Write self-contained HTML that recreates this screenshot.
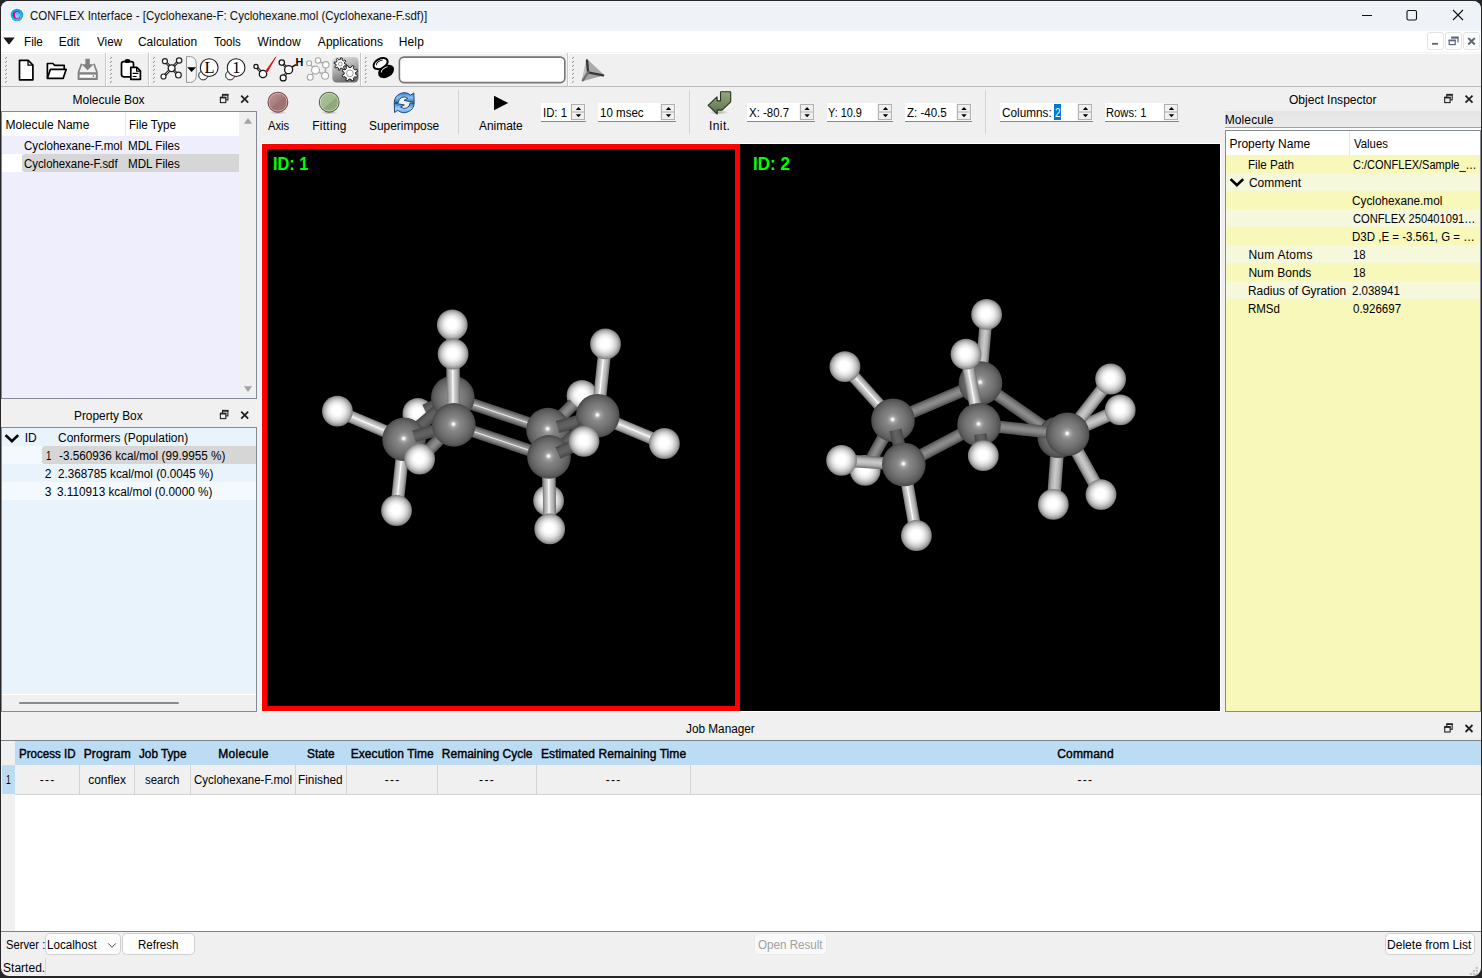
<!DOCTYPE html>
<html><head><meta charset="utf-8"><title>CONFLEX Interface</title>
<style>
html,body{margin:0;padding:0;background:#262626;}
body{width:1482px;height:978px;overflow:hidden;position:relative;font-family:"Liberation Sans", sans-serif;font-size:12px;}
#w div,#w span.t,#w svg{position:absolute;}
#w div{box-sizing:border-box;}
span.t{white-space:nowrap;line-height:16px;height:16px;}
</style></head><body><div id="w">
<div style="left:1px;top:1px;width:1480px;height:975px;background:#f0f0f0;border-radius:8px 8px 8px 8px;overflow:hidden;"></div>
<div style="left:1px;top:1px;width:1480px;height:30px;background:#eff3f8;border-radius:8px 8px 0 0;"></div>
<div style="left:1px;top:31px;width:1480px;height:21px;background:#ffffff;"></div>
<div style="left:1px;top:86px;width:1480px;height:1px;background:#bdbdbd;"></div>
<div style="left:1px;top:52px;width:1480px;height:1px;background:#f3f3f3;"></div>
<div style="left:1px;top:53px;width:1480px;height:1px;background:#fdfdfd;"></div>
<div style="left:105px;top:53px;width:1px;height:33px;background:#c9c9c9;"></div>
<div style="left:106px;top:53px;width:1px;height:33px;background:#ffffff;"></div>
<div style="left:148px;top:53px;width:1px;height:33px;background:#c9c9c9;"></div>
<div style="left:149px;top:53px;width:1px;height:33px;background:#ffffff;"></div>
<div style="left:360px;top:53px;width:1px;height:33px;background:#c9c9c9;"></div>
<div style="left:361px;top:53px;width:1px;height:33px;background:#ffffff;"></div>
<div style="left:567px;top:53px;width:1px;height:33px;background:#c9c9c9;"></div>
<div style="left:568px;top:53px;width:1px;height:33px;background:#ffffff;"></div>
<div style="left:1px;top:111px;width:256px;height:288px;background:#eeeefd;border:1px solid #848a96;"></div>
<div style="left:2px;top:112px;width:237px;height:24px;background:#ffffff;"></div>
<div style="left:125px;top:112px;width:1px;height:24px;background:#e5e5e5;"></div>
<div style="left:239px;top:112px;width:17px;height:286px;background:#f0f0f0;"></div>
<div style="left:2px;top:154px;width:237px;height:18px;background:#ffffff;"></div>
<div style="left:22px;top:154px;width:217px;height:18px;background:#d6d6d6;border-radius:3px 0 0 3px;"></div>
<div style="left:1px;top:427px;width:256px;height:285px;background:#e8f3fc;border:1px solid #848a96;"></div>
<div style="left:2px;top:446px;width:254px;height:18px;background:#f4f9fd;"></div>
<div style="left:2px;top:482px;width:254px;height:18px;background:#f4f9fd;"></div>
<div style="left:42px;top:446px;width:214px;height:18px;background:#d6d6d6;border-radius:3px 0 0 3px;"></div>
<div style="left:2px;top:694px;width:254px;height:1px;background:#ffffff;"></div>
<div style="left:2px;top:695px;width:254px;height:16px;background:#f0f0f0;"></div>
<div style="left:19px;top:701.5px;width:160px;height:2px;background:#8a8a8a;border-radius:1px;"></div>
<div style="left:458px;top:90px;width:1px;height:44px;background:#d4d4d4;"></div>
<div style="left:689px;top:90px;width:1px;height:44px;background:#d4d4d4;"></div>
<div style="left:985px;top:90px;width:1px;height:44px;background:#d4d4d4;"></div>
<div style="left:541px;top:103px;width:29px;height:18px;background:#ffffff;"></div>
<div style="left:570px;top:103px;width:16px;height:18px;background:#f4f4f4;"></div>
<div style="left:541px;top:121px;width:45px;height:1px;background:#868686;"></div>
<div style="left:571px;top:104px;width:14px;height:16px;background:#f0f0f0;border:1px solid #b0b0b0;"></div>
<div style="left:598px;top:103px;width:62px;height:18px;background:#ffffff;"></div>
<div style="left:660px;top:103px;width:16px;height:18px;background:#f4f4f4;"></div>
<div style="left:598px;top:121px;width:78px;height:1px;background:#868686;"></div>
<div style="left:661px;top:104px;width:14px;height:16px;background:#f0f0f0;border:1px solid #b0b0b0;"></div>
<div style="left:747px;top:103px;width:51.6px;height:18px;background:#ffffff;"></div>
<div style="left:798.6px;top:103px;width:16px;height:18px;background:#f4f4f4;"></div>
<div style="left:747px;top:121px;width:67.6px;height:1px;background:#868686;"></div>
<div style="left:799.6px;top:104px;width:14px;height:16px;background:#f0f0f0;border:1px solid #b0b0b0;"></div>
<div style="left:827px;top:103px;width:50px;height:18px;background:#ffffff;"></div>
<div style="left:877px;top:103px;width:16px;height:18px;background:#f4f4f4;"></div>
<div style="left:827px;top:121px;width:66px;height:1px;background:#868686;"></div>
<div style="left:878px;top:104px;width:14px;height:16px;background:#f0f0f0;border:1px solid #b0b0b0;"></div>
<div style="left:905px;top:103px;width:50.5px;height:18px;background:#ffffff;"></div>
<div style="left:955.5px;top:103px;width:16px;height:18px;background:#f4f4f4;"></div>
<div style="left:905px;top:121px;width:66.5px;height:1px;background:#868686;"></div>
<div style="left:956.5px;top:104px;width:14px;height:16px;background:#f0f0f0;border:1px solid #b0b0b0;"></div>
<div style="left:1000px;top:103px;width:77px;height:18px;background:#ffffff;"></div>
<div style="left:1077px;top:103px;width:16px;height:18px;background:#f4f4f4;"></div>
<div style="left:1000px;top:121px;width:93px;height:1px;background:#868686;"></div>
<div style="left:1078px;top:104px;width:14px;height:16px;background:#f0f0f0;border:1px solid #b0b0b0;"></div>
<div style="left:1054px;top:104px;width:7px;height:16px;background:#0078d7;"></div>
<div style="left:1105px;top:103px;width:58px;height:18px;background:#ffffff;"></div>
<div style="left:1163px;top:103px;width:16px;height:18px;background:#f4f4f4;"></div>
<div style="left:1105px;top:121px;width:74px;height:1px;background:#868686;"></div>
<div style="left:1164px;top:104px;width:14px;height:16px;background:#f0f0f0;border:1px solid #b0b0b0;"></div>
<div style="left:261px;top:143px;width:960px;height:569px;background:#ffffff;"></div>
<div style="left:262px;top:144px;width:478px;height:567px;background:#000;border:5px solid #ff0000;"></div>
<div style="left:740px;top:144px;width:480px;height:567px;background:#000;"></div>
<div style="left:1225px;top:111px;width:256px;height:16px;background:linear-gradient(#e4e4e4,#ebebeb);"></div>
<div style="left:1225px;top:127px;width:256px;height:1px;background:#a0a0a0;"></div>
<div style="left:1225px;top:128px;width:256px;height:2px;background:#fcfcfc;"></div>
<div style="left:1225px;top:130px;width:256px;height:582px;background:#f8f8ba;border:1px solid #848a96;"></div>
<div style="left:1226px;top:131px;width:254px;height:24px;background:#fff;"></div>
<div style="left:1349px;top:131px;width:1px;height:24px;background:#e5e5e5;"></div>
<div style="left:1226px;top:173px;width:254px;height:18px;background:#f6f8dc;"></div>
<div style="left:1226px;top:209px;width:254px;height:18px;background:#f6f8dc;"></div>
<div style="left:1226px;top:245px;width:254px;height:18px;background:#f6f8dc;"></div>
<div style="left:1226px;top:281px;width:254px;height:18px;background:#f6f8dc;"></div>
<div style="left:1px;top:740px;width:1480px;height:192px;background:#ffffff;border-top:1px solid #7a828c;border-bottom:1px solid #7a828c;"></div>
<div style="left:1px;top:741px;width:1.2px;height:190px;background:#f0f0f0;"></div>
<div style="left:2px;top:741px;width:13px;height:24px;background:#f0f0f0;"></div>
<div style="left:15px;top:741px;width:1466px;height:24px;background:#bcdcf4;"></div>
<div style="left:2px;top:765px;width:13px;height:29px;background:#bcdcf4;"></div>
<div style="left:2px;top:794px;width:13px;height:137px;background:#f0f0f0;"></div>
<div style="left:15px;top:765px;width:1466px;height:30px;background:#f0f0f0;border-bottom:1px solid #d4d4d4;"></div>
<div style="left:79px;top:765px;width:1px;height:29px;background:#d4d4d4;"></div>
<div style="left:134px;top:765px;width:1px;height:29px;background:#d4d4d4;"></div>
<div style="left:190px;top:765px;width:1px;height:29px;background:#d4d4d4;"></div>
<div style="left:295px;top:765px;width:1px;height:29px;background:#d4d4d4;"></div>
<div style="left:346px;top:765px;width:1px;height:29px;background:#d4d4d4;"></div>
<div style="left:437px;top:765px;width:1px;height:29px;background:#d4d4d4;"></div>
<div style="left:536px;top:765px;width:1px;height:29px;background:#d4d4d4;"></div>
<div style="left:690px;top:765px;width:1px;height:29px;background:#d4d4d4;"></div>
<div style="left:45px;top:933px;width:76px;height:22px;background:#fdfdfd;border:1px solid #d0d0d0;border-radius:4.5px;"></div>
<div style="left:122px;top:933px;width:73px;height:22px;background:#fdfdfd;border:1px solid #d0d0d0;border-radius:4.5px;"></div>
<div style="left:754px;top:933px;width:73px;height:22px;background:#f9f9f9;border:1px solid #ebebeb;border-radius:4.5px;"></div>
<div style="left:1385px;top:933px;width:90px;height:22px;background:#fdfdfd;border:1px solid #d0d0d0;border-radius:4.5px;"></div>
<div style="left:45px;top:958px;width:1px;height:17px;background:#d8d8d8;"></div>
<svg width="1482" height="978" viewBox="0 0 1482 978" style="left:0;top:0"><defs>
<radialGradient id="sH" cx="0.5" cy="0.5" r="0.5" fx="0.47" fy="0.46"><stop offset="0" stop-color="#fff"/><stop offset="0.3" stop-color="#fff"/><stop offset="0.55" stop-color="#e8e8e8"/><stop offset="0.78" stop-color="#bebebe"/><stop offset="0.92" stop-color="#969696"/><stop offset="1" stop-color="#767676"/></radialGradient>
<radialGradient id="sC" cx="0.5" cy="0.5" r="0.5" fx="0.49" fy="0.48"><stop offset="0" stop-color="#fff"/><stop offset="0.05" stop-color="#f0f0f0"/><stop offset="0.14" stop-color="#a4a4a4"/><stop offset="0.3" stop-color="#868686"/><stop offset="0.6" stop-color="#737373"/><stop offset="0.85" stop-color="#5e5e5e"/><stop offset="1" stop-color="#484848"/></radialGradient>
<radialGradient id="sCb" cx="0.5" cy="0.5" r="0.5" fx="0.49" fy="0.48"><stop offset="0" stop-color="#8a8a8a"/><stop offset="0.3" stop-color="#7a7a7a"/><stop offset="0.6" stop-color="#6a6a6a"/><stop offset="0.85" stop-color="#585858"/><stop offset="1" stop-color="#444"/></radialGradient>
<linearGradient id="bL" x1="0" y1="0" x2="0" y2="1"><stop offset="0" stop-color="#727272"/><stop offset="0.15" stop-color="#a8a8a8"/><stop offset="0.36" stop-color="#cfcfcf"/><stop offset="0.46" stop-color="#ffffff"/><stop offset="0.56" stop-color="#d2d2d2"/><stop offset="0.8" stop-color="#ababab"/><stop offset="1" stop-color="#6a6a6a"/></linearGradient>
<linearGradient id="bLm" x1="0" y1="0" x2="0" y2="1"><stop offset="0" stop-color="#6c6c6c"/><stop offset="0.25" stop-color="#b0b0b0"/><stop offset="0.5" stop-color="#cacaca"/><stop offset="0.75" stop-color="#b0b0b0"/><stop offset="1" stop-color="#686868"/></linearGradient>
<linearGradient id="bS" x1="0" y1="0" x2="0" y2="1"><stop offset="0" stop-color="#4c4c4c"/><stop offset="0.25" stop-color="#7e7e7e"/><stop offset="0.42" stop-color="#9e9e9e"/><stop offset="0.5" stop-color="#efefef"/><stop offset="0.58" stop-color="#a2a2a2"/><stop offset="0.78" stop-color="#7a7a7a"/><stop offset="1" stop-color="#4a4a4a"/></linearGradient>
<linearGradient id="bM" x1="0" y1="0" x2="0" y2="1"><stop offset="0" stop-color="#505050"/><stop offset="0.3" stop-color="#808080"/><stop offset="0.5" stop-color="#8e8e8e"/><stop offset="0.7" stop-color="#7e7e7e"/><stop offset="1" stop-color="#4e4e4e"/></linearGradient>
<linearGradient id="bD" x1="0" y1="0" x2="0" y2="1"><stop offset="0" stop-color="#454545"/><stop offset="0.3" stop-color="#5e5e5e"/><stop offset="0.6" stop-color="#626262"/><stop offset="1" stop-color="#484848"/></linearGradient>
</defs>
<circle cx="417.9" cy="413.5" r="15.4" fill="url(#sH)"/>
<circle cx="582.0" cy="395.5" r="15.4" fill="url(#sH)"/>
<rect transform="translate(452.8,397.6) rotate(155.51) scale(1,1)" x="0" y="-6.20" width="30.68" height="12.40" fill="url(#bD)"/>
<rect transform="translate(548.0,429.6) rotate(-45.08) scale(1,1)" x="0" y="-6.20" width="36.60" height="12.40" fill="url(#bM)"/>
<rect transform="translate(452.8,397.6) rotate(-90.39) scale(1,1)" x="0" y="-6.20" width="72.80" height="12.40" fill="url(#bL)"/>
<rect transform="translate(548.0,429.6) rotate(89.52) scale(1,1)" x="0" y="-6.20" width="70.90" height="12.40" fill="url(#bL)"/>
<circle cx="452.3" cy="324.8" r="15.4" fill="url(#sH)"/>
<circle cx="548.6" cy="500.5" r="15.4" fill="url(#sH)"/>
<rect transform="translate(452.8,397.6) rotate(18.58) scale(1,1)" x="0" y="-6.00" width="100.43" height="12.00" fill="url(#bS)"/>
<rect transform="translate(404.1,439.3) rotate(-40.57) scale(1,1)" x="0" y="-6.20" width="64.11" height="12.40" fill="url(#bD)"/>
<circle cx="452.8" cy="397.6" r="21.8" fill="url(#sC)"/>
<circle cx="548.0" cy="429.6" r="21.8" fill="url(#sC)"/>
<rect transform="translate(557.5,427.0) rotate(-15.60) scale(1,1)" x="0" y="-6.20" width="41.88" height="12.40" fill="url(#bD)"/>
<rect transform="translate(337.4,411.1) rotate(22.92) scale(1,1)" x="0" y="-6.20" width="72.42" height="12.40" fill="url(#bL)"/>
<rect transform="translate(404.1,439.3) rotate(96.09) scale(1,-1)" x="0" y="-6.50" width="71.60" height="13.00" fill="url(#bL)"/>
<rect transform="translate(597.8,415.7) rotate(-83.88) scale(1,1)" x="0" y="-6.50" width="72.21" height="13.00" fill="url(#bL)"/>
<rect transform="translate(597.8,415.7) rotate(22.66) scale(1,1)" x="0" y="-6.20" width="72.17" height="12.40" fill="url(#bL)"/>
<circle cx="404.1" cy="439.3" r="21.8" fill="url(#sC)"/>
<circle cx="597.8" cy="415.7" r="21.8" fill="url(#sC)"/>
<circle cx="337.4" cy="411.1" r="15.4" fill="url(#sH)"/>
<circle cx="396.5" cy="510.5" r="15.4" fill="url(#sH)"/>
<circle cx="605.5" cy="343.9" r="15.4" fill="url(#sH)"/>
<circle cx="664.4" cy="443.5" r="15.4" fill="url(#sH)"/>
<rect transform="translate(414.0,436.4) rotate(-16.16) scale(1,1)" x="0" y="-6.20" width="41.40" height="12.40" fill="url(#bD)"/>
<rect transform="translate(584.6,426.8) rotate(139.83) scale(1,1)" x="0" y="-6.20" width="46.62" height="12.40" fill="url(#bD)"/>
<rect transform="translate(453.8,424.9) rotate(18.58) scale(1,1)" x="0" y="-6.00" width="100.43" height="12.00" fill="url(#bS)"/>
<rect transform="translate(453.8,424.9) rotate(-90.57) scale(1,1)" x="0" y="-6.50" width="70.90" height="13.00" fill="url(#bL)"/>
<rect transform="translate(549.0,456.9) rotate(89.44) scale(1,-1)" x="0" y="-6.50" width="72.00" height="13.00" fill="url(#bL)"/>
<rect transform="translate(453.8,424.9) rotate(135.08) scale(1,1)" x="0" y="-6.20" width="48.30" height="12.40" fill="url(#bM)"/>
<circle cx="453.8" cy="424.9" r="21.8" fill="url(#sC)"/>
<circle cx="549.0" cy="456.9" r="21.8" fill="url(#sC)"/>
<rect transform="translate(557.8,453.0) rotate(-24.02) scale(1,1)" x="0" y="-6.20" width="28.74" height="12.40" fill="url(#bD)"/>
<circle cx="453.1" cy="354.0" r="15.4" fill="url(#sH)"/>
<circle cx="549.7" cy="528.9" r="15.4" fill="url(#sH)"/>
<circle cx="419.6" cy="459.0" r="15.4" fill="url(#sH)"/>
<circle cx="584.0" cy="441.3" r="15.4" fill="url(#sH)"/>
<circle cx="865.2" cy="470.3" r="15.4" fill="url(#sH)"/>
<rect transform="translate(893.0,420.2) rotate(119.03) scale(1,1)" x="0" y="-6.20" width="48.70" height="12.40" fill="url(#bM)"/>
<rect transform="translate(1058.3,437.2) rotate(-23.88) scale(1,1)" x="0" y="-6.60" width="67.69" height="13.20" fill="url(#bLm)"/>
<rect transform="translate(1058.3,437.2) rotate(94.26) scale(1,1)" x="0" y="-6.70" width="67.39" height="13.40" fill="url(#bLm)"/>
<rect transform="translate(980.5,383.0) rotate(34.86) scale(1,1)" x="0" y="-6.20" width="94.82" height="12.40" fill="url(#bM)"/>
<circle cx="1058.3" cy="437.2" r="20.8" fill="url(#sCb)"/>
<rect transform="translate(980.5,383.0) rotate(-84.92) scale(1,1)" x="0" y="-6.20" width="68.87" height="12.40" fill="url(#bLm)"/>
<rect transform="translate(893.0,420.2) rotate(-23.03) scale(1,1)" x="0" y="-6.20" width="95.08" height="12.40" fill="url(#bM)"/>
<circle cx="980.5" cy="383.0" r="21.8" fill="url(#sC)"/>
<circle cx="986.6" cy="314.4" r="15.4" fill="url(#sH)"/>
<rect transform="translate(844.9,366.7) rotate(48.04) scale(1,1)" x="0" y="-6.20" width="71.94" height="12.40" fill="url(#bL)"/>
<circle cx="893.0" cy="420.2" r="21.8" fill="url(#sC)"/>
<circle cx="844.9" cy="366.7" r="15.4" fill="url(#sH)"/>
<rect transform="translate(895.4,429.9) rotate(76.30) scale(1,1)" x="0" y="-6.20" width="35.57" height="12.40" fill="url(#bD)"/>
<rect transform="translate(903.8,464.5) rotate(-27.89) scale(1,1)" x="0" y="-6.20" width="85.08" height="12.40" fill="url(#bM)"/>
<rect transform="translate(979.0,424.7) rotate(6.12) scale(1,1)" x="0" y="-6.20" width="89.11" height="12.40" fill="url(#bM)"/>
<rect transform="translate(979.0,424.7) rotate(-100.45) scale(1,1)" x="0" y="-6.20" width="71.69" height="12.40" fill="url(#bL)"/>
<rect transform="translate(903.8,464.5) rotate(-176.14) scale(1,1)" x="0" y="-6.20" width="62.44" height="12.40" fill="url(#bLm)"/>
<rect transform="translate(903.8,464.5) rotate(79.94) scale(1,-1)" x="0" y="-6.20" width="72.11" height="12.40" fill="url(#bL)"/>
<rect transform="translate(1067.6,434.2) rotate(-52.08) scale(1,1)" x="0" y="-6.60" width="69.97" height="13.20" fill="url(#bLm)"/>
<rect transform="translate(1067.6,434.2) rotate(61.06) scale(1,1)" x="0" y="-6.70" width="69.02" height="13.40" fill="url(#bLm)"/>
<circle cx="1120.2" cy="409.8" r="15.4" fill="url(#sH)"/>
<circle cx="1053.3" cy="504.4" r="15.4" fill="url(#sH)"/>
<circle cx="979.0" cy="424.7" r="21.8" fill="url(#sC)"/>
<circle cx="903.8" cy="464.5" r="21.8" fill="url(#sC)"/>
<circle cx="1067.6" cy="434.2" r="21.8" fill="url(#sC)"/>
<circle cx="966.0" cy="354.2" r="15.4" fill="url(#sH)"/>
<circle cx="841.5" cy="460.3" r="15.4" fill="url(#sH)"/>
<circle cx="916.4" cy="535.5" r="15.4" fill="url(#sH)"/>
<circle cx="1110.6" cy="379.0" r="15.4" fill="url(#sH)"/>
<circle cx="1101.0" cy="494.6" r="15.4" fill="url(#sH)"/>
<rect transform="translate(980.3,434.0) rotate(82.08) scale(1,1)" x="0" y="-6.20" width="21.84" height="12.40" fill="url(#bD)"/>
<circle cx="983.3" cy="455.6" r="15.4" fill="url(#sH)"/></svg><svg width="1482" height="978" viewBox="0 0 1482 978" style="left:0;top:0;pointer-events:none"><defs>
<linearGradient id="gGear" x1="0" y1="0" x2="0.35" y2="1"><stop offset="0" stop-color="#e6e6e6"/><stop offset="0.45" stop-color="#b9b9b9"/><stop offset="1" stop-color="#707070"/></linearGradient>
<linearGradient id="gAxis" x1="0.15" y1="0.1" x2="0.85" y2="0.9"><stop offset="0" stop-color="#b89090"/><stop offset="0.5" stop-color="#a67a7a"/><stop offset="0.52" stop-color="#9f7070"/><stop offset="1" stop-color="#a07272"/></linearGradient>
<linearGradient id="gFit" x1="0.15" y1="0.1" x2="0.85" y2="0.9"><stop offset="0" stop-color="#a9c296"/><stop offset="0.55" stop-color="#9fb98b"/><stop offset="0.6" stop-color="#8ea57b"/><stop offset="1" stop-color="#94ac80"/></linearGradient>
<linearGradient id="gBlue" x1="0" y1="0" x2="0" y2="1"><stop offset="0" stop-color="#2f86d6"/><stop offset="0.5" stop-color="#8cc0ee"/><stop offset="1" stop-color="#2c7fd0"/></linearGradient>
<linearGradient id="gBlue2" x1="0" y1="0" x2="0" y2="1"><stop offset="0" stop-color="#5aa2e2"/><stop offset="0.4" stop-color="#a6d0f4"/><stop offset="1" stop-color="#2a7ccc"/></linearGradient>
<linearGradient id="gInit" x1="0" y1="0" x2="0" y2="1"><stop offset="0" stop-color="#93a67f"/><stop offset="0.45" stop-color="#7d9169"/><stop offset="1" stop-color="#566a47"/></linearGradient>
<radialGradient id="gApp" cx="0.5" cy="0.6" r="0.55"><stop offset="0" stop-color="#7fe4ff"/><stop offset="0.6" stop-color="#22b8f0"/><stop offset="1" stop-color="#0c9fe4"/></radialGradient>
<radialGradient id="gShadow"><stop offset="0" stop-color="#000" stop-opacity="0.28"/><stop offset="1" stop-color="#000" stop-opacity="0"/></radialGradient>
</defs>
<rect x="9.8" y="7.8" width="14.6" height="14.6" rx="3.2" fill="#fff" stroke="#e9e4e4" stroke-width="0.6"/>
<circle cx="17" cy="15" r="6.3" fill="url(#gApp)"/>
<text x="16.7" y="18.9" font-family="Liberation Serif,serif" font-weight="bold" font-size="11.8" fill="#e8007c" text-anchor="middle">C</text>
<path d="M1362,15.5 H1372" stroke="#111" stroke-width="1"/>
<rect x="1407" y="10.5" width="9.5" height="9.5" rx="1.5" fill="none" stroke="#111" stroke-width="1.1"/>
<path d="M1453,10 L1463,20 M1463,10 L1453,20" stroke="#111" stroke-width="1.1"/>
<rect x="1427.5" y="32.5" width="16" height="17" rx="2.5" fill="#fff" stroke="#e3e3e3" stroke-width="1"/>
<rect x="1445.5" y="32.5" width="16" height="17" rx="2.5" fill="#fff" stroke="#e3e3e3" stroke-width="1"/>
<rect x="1463.5" y="32.5" width="16" height="17" rx="2.5" fill="#fff" stroke="#e3e3e3" stroke-width="1"/>
<path d="M1432,43.8 H1438" stroke="#5a6678" stroke-width="1.8"/>
<path d="M1451.5,38 H1458 V42.5 M1453.3,38.2 V37.3" stroke="#5a6678" stroke-width="1.2" fill="none"/>
<path d="M1451,37.4 H1458.6" stroke="#5a6678" stroke-width="1.8"/>
<rect x="1449.2" y="40.6" width="6" height="4" fill="#fff" stroke="#5a6678" stroke-width="1.2"/>
<path d="M1448.6,40.3 H1455.8" stroke="#5a6678" stroke-width="1.6"/>
<path d="M1468.3,38 L1474.8,44.5 M1474.8,38 L1468.3,44.5" stroke="#5a6678" stroke-width="1.9"/>
<path d="M3.3,37.4 H14.7 L9.6,43.9 Q9,44.6 8.4,43.9 Z" fill="#1a1a1a"/>
<path d="M5.2,58.8 l1.6,-1.6" stroke="#9a9a9a" stroke-width="1.1"/>
<path d="M6,59.5 l1.6,-1.6" stroke="#fff" stroke-width="0.9"/>
<path d="M5.2,62.8 l1.6,-1.6" stroke="#9a9a9a" stroke-width="1.1"/>
<path d="M6,63.5 l1.6,-1.6" stroke="#fff" stroke-width="0.9"/>
<path d="M5.2,66.8 l1.6,-1.6" stroke="#9a9a9a" stroke-width="1.1"/>
<path d="M6,67.5 l1.6,-1.6" stroke="#fff" stroke-width="0.9"/>
<path d="M5.2,70.8 l1.6,-1.6" stroke="#9a9a9a" stroke-width="1.1"/>
<path d="M6,71.5 l1.6,-1.6" stroke="#fff" stroke-width="0.9"/>
<path d="M5.2,74.8 l1.6,-1.6" stroke="#9a9a9a" stroke-width="1.1"/>
<path d="M6,75.5 l1.6,-1.6" stroke="#fff" stroke-width="0.9"/>
<path d="M5.2,78.8 l1.6,-1.6" stroke="#9a9a9a" stroke-width="1.1"/>
<path d="M6,79.5 l1.6,-1.6" stroke="#fff" stroke-width="0.9"/>
<path d="M5.2,82.8 l1.6,-1.6" stroke="#9a9a9a" stroke-width="1.1"/>
<path d="M6,83.5 l1.6,-1.6" stroke="#fff" stroke-width="0.9"/>
<path d="M110.2,58.8 l1.6,-1.6" stroke="#9a9a9a" stroke-width="1.1"/>
<path d="M111,59.5 l1.6,-1.6" stroke="#fff" stroke-width="0.9"/>
<path d="M110.2,62.8 l1.6,-1.6" stroke="#9a9a9a" stroke-width="1.1"/>
<path d="M111,63.5 l1.6,-1.6" stroke="#fff" stroke-width="0.9"/>
<path d="M110.2,66.8 l1.6,-1.6" stroke="#9a9a9a" stroke-width="1.1"/>
<path d="M111,67.5 l1.6,-1.6" stroke="#fff" stroke-width="0.9"/>
<path d="M110.2,70.8 l1.6,-1.6" stroke="#9a9a9a" stroke-width="1.1"/>
<path d="M111,71.5 l1.6,-1.6" stroke="#fff" stroke-width="0.9"/>
<path d="M110.2,74.8 l1.6,-1.6" stroke="#9a9a9a" stroke-width="1.1"/>
<path d="M111,75.5 l1.6,-1.6" stroke="#fff" stroke-width="0.9"/>
<path d="M110.2,78.8 l1.6,-1.6" stroke="#9a9a9a" stroke-width="1.1"/>
<path d="M111,79.5 l1.6,-1.6" stroke="#fff" stroke-width="0.9"/>
<path d="M110.2,82.8 l1.6,-1.6" stroke="#9a9a9a" stroke-width="1.1"/>
<path d="M111,83.5 l1.6,-1.6" stroke="#fff" stroke-width="0.9"/>
<path d="M153.2,58.8 l1.6,-1.6" stroke="#9a9a9a" stroke-width="1.1"/>
<path d="M154,59.5 l1.6,-1.6" stroke="#fff" stroke-width="0.9"/>
<path d="M153.2,62.8 l1.6,-1.6" stroke="#9a9a9a" stroke-width="1.1"/>
<path d="M154,63.5 l1.6,-1.6" stroke="#fff" stroke-width="0.9"/>
<path d="M153.2,66.8 l1.6,-1.6" stroke="#9a9a9a" stroke-width="1.1"/>
<path d="M154,67.5 l1.6,-1.6" stroke="#fff" stroke-width="0.9"/>
<path d="M153.2,70.8 l1.6,-1.6" stroke="#9a9a9a" stroke-width="1.1"/>
<path d="M154,71.5 l1.6,-1.6" stroke="#fff" stroke-width="0.9"/>
<path d="M153.2,74.8 l1.6,-1.6" stroke="#9a9a9a" stroke-width="1.1"/>
<path d="M154,75.5 l1.6,-1.6" stroke="#fff" stroke-width="0.9"/>
<path d="M153.2,78.8 l1.6,-1.6" stroke="#9a9a9a" stroke-width="1.1"/>
<path d="M154,79.5 l1.6,-1.6" stroke="#fff" stroke-width="0.9"/>
<path d="M153.2,82.8 l1.6,-1.6" stroke="#9a9a9a" stroke-width="1.1"/>
<path d="M154,83.5 l1.6,-1.6" stroke="#fff" stroke-width="0.9"/>
<path d="M364.9,58.8 l1.6,-1.6" stroke="#9a9a9a" stroke-width="1.1"/>
<path d="M365.7,59.5 l1.6,-1.6" stroke="#fff" stroke-width="0.9"/>
<path d="M364.9,62.8 l1.6,-1.6" stroke="#9a9a9a" stroke-width="1.1"/>
<path d="M365.7,63.5 l1.6,-1.6" stroke="#fff" stroke-width="0.9"/>
<path d="M364.9,66.8 l1.6,-1.6" stroke="#9a9a9a" stroke-width="1.1"/>
<path d="M365.7,67.5 l1.6,-1.6" stroke="#fff" stroke-width="0.9"/>
<path d="M364.9,70.8 l1.6,-1.6" stroke="#9a9a9a" stroke-width="1.1"/>
<path d="M365.7,71.5 l1.6,-1.6" stroke="#fff" stroke-width="0.9"/>
<path d="M364.9,74.8 l1.6,-1.6" stroke="#9a9a9a" stroke-width="1.1"/>
<path d="M365.7,75.5 l1.6,-1.6" stroke="#fff" stroke-width="0.9"/>
<path d="M364.9,78.8 l1.6,-1.6" stroke="#9a9a9a" stroke-width="1.1"/>
<path d="M365.7,79.5 l1.6,-1.6" stroke="#fff" stroke-width="0.9"/>
<path d="M364.9,82.8 l1.6,-1.6" stroke="#9a9a9a" stroke-width="1.1"/>
<path d="M365.7,83.5 l1.6,-1.6" stroke="#fff" stroke-width="0.9"/>
<path d="M572.2,58.8 l1.6,-1.6" stroke="#9a9a9a" stroke-width="1.1"/>
<path d="M573,59.5 l1.6,-1.6" stroke="#fff" stroke-width="0.9"/>
<path d="M572.2,62.8 l1.6,-1.6" stroke="#9a9a9a" stroke-width="1.1"/>
<path d="M573,63.5 l1.6,-1.6" stroke="#fff" stroke-width="0.9"/>
<path d="M572.2,66.8 l1.6,-1.6" stroke="#9a9a9a" stroke-width="1.1"/>
<path d="M573,67.5 l1.6,-1.6" stroke="#fff" stroke-width="0.9"/>
<path d="M572.2,70.8 l1.6,-1.6" stroke="#9a9a9a" stroke-width="1.1"/>
<path d="M573,71.5 l1.6,-1.6" stroke="#fff" stroke-width="0.9"/>
<path d="M572.2,74.8 l1.6,-1.6" stroke="#9a9a9a" stroke-width="1.1"/>
<path d="M573,75.5 l1.6,-1.6" stroke="#fff" stroke-width="0.9"/>
<path d="M572.2,78.8 l1.6,-1.6" stroke="#9a9a9a" stroke-width="1.1"/>
<path d="M573,79.5 l1.6,-1.6" stroke="#fff" stroke-width="0.9"/>
<path d="M572.2,82.8 l1.6,-1.6" stroke="#9a9a9a" stroke-width="1.1"/>
<path d="M573,83.5 l1.6,-1.6" stroke="#fff" stroke-width="0.9"/>
<path d="M19.5,60.3 H28.2 L32.9,65 V79.8 H19.5 Z" fill="#fff" stroke="#000" stroke-width="1.7" stroke-linejoin="round"/>
<path d="M28,60.6 V65.2 H32.6" fill="none" stroke="#000" stroke-width="1.3"/>
<path d="M47.4,78.3 V63.5 H52.9 L54.5,65.3 H64.2 V69" fill="#fff" stroke="#000" stroke-width="1.7" stroke-linejoin="round"/>
<path d="M50.4,69.3 H66.2 L63.2,78.3 H47.4 Z" fill="#fff" stroke="#000" stroke-width="1.7" stroke-linejoin="round"/>
<path d="M81.6,63.8 L78.3,72.8 M93.9,63.8 L97.2,72.8" stroke="#808080" stroke-width="1.7" fill="none"/>
<rect x="77.6" y="72.2" width="20.2" height="7.9" rx="1.2" fill="#808080"/>
<rect x="79.6" y="74.6" width="16.2" height="3.2" fill="#fff"/>
<circle cx="93.4" cy="76.2" r="0.9" fill="#808080"/>
<path d="M85.4,58.7 H89.8 V64.2 H93.7 L87.6,70.3 L81.5,64.2 H85.4 Z" fill="#808080"/>
<rect x="121.5" y="61.6" width="12" height="15.2" rx="2.2" fill="#fff" stroke="#000" stroke-width="1.7"/>
<ellipse cx="127.4" cy="61" rx="2.9" ry="2" fill="#000"/>
<path d="M130.8,67.3 H136.8 L140.4,70.9 V79.3 H130.8 Z" fill="#fff" stroke="#000" stroke-width="1.7" stroke-linejoin="round"/>
<path d="M136.6,67.6 V71.1 H140.1" fill="none" stroke="#000" stroke-width="1.2"/>
<path d="M132.6,73.4 H138.4 M132.6,76.5 H136.6" stroke="#000" stroke-width="1.1"/>
<path d="M171.6,68.3 L164.9,61.2" stroke="#222" stroke-width="2.6"/>
<path d="M171.6,68.3 L164.9,61.2" stroke="#fff" stroke-width="0.7"/>
<path d="M171.6,68.3 L179.1,60.5" stroke="#222" stroke-width="2.6"/>
<path d="M171.6,68.3 L179.1,60.5" stroke="#fff" stroke-width="0.7"/>
<path d="M171.6,68.3 L163.5,76.5" stroke="#222" stroke-width="2.6"/>
<path d="M171.6,68.3 L163.5,76.5" stroke="#fff" stroke-width="0.7"/>
<path d="M171.6,68.3 L178.4,75.1" stroke="#222" stroke-width="2.6"/>
<path d="M171.6,68.3 L178.4,75.1" stroke="#fff" stroke-width="0.7"/>
<circle cx="164.9" cy="61.2" r="2.5" fill="#fff" stroke="#222" stroke-width="1.2"/>
<circle cx="179.1" cy="60.5" r="2.7" fill="#fff" stroke="#222" stroke-width="1.2"/>
<circle cx="163.5" cy="76.5" r="2.5" fill="#fff" stroke="#222" stroke-width="1.2"/>
<circle cx="178.4" cy="75.1" r="2.9" fill="#fff" stroke="#222" stroke-width="1.2"/>
<circle cx="171.6" cy="68.3" r="3.4" fill="#fff" stroke="#222" stroke-width="1.3"/>
<path d="M173.6,70.9 A3.3,3.3 0 0 0 174.8,68.8" stroke="#333" stroke-width="1.4" fill="none"/>
<path d="M186.5,56.6 H190.5 Q196.3,57.2 196.3,64 V75 Q196.3,81.8 190.5,82.4 H186.5 Z" fill="#f6f6f6" stroke="#8c8c8c" stroke-width="0.9"/>
<path d="M187.2,67.3 H196 L191.6,71.9 Z" fill="#000"/>
<circle cx="203.2" cy="75.4" r="4.5" fill="#fafafa" stroke="#222" stroke-width="1"/>
<circle cx="209.2" cy="67.7" r="8.9" fill="#fff" stroke="#1a1a1a" stroke-width="1.05"/>
<text x="209.5" y="72.7" font-family="Liberation Serif,serif" font-size="16.5" fill="#000" text-anchor="middle">L</text>
<circle cx="230.1" cy="75.4" r="4.5" fill="#fafafa" stroke="#222" stroke-width="1"/>
<circle cx="236.1" cy="67.7" r="8.9" fill="#fff" stroke="#1a1a1a" stroke-width="1.05"/>
<text x="236.4" y="72.7" font-family="Liberation Serif,serif" font-size="16.5" fill="#000" text-anchor="middle">1</text>
<path d="M256,66.5 L263,74" stroke="#222" stroke-width="2.6"/>
<path d="M256,66.5 L263,74" stroke="#fff" stroke-width="0.7"/>
<circle cx="256" cy="66.4" r="2.1" fill="#fff" stroke="#111" stroke-width="1.2"/>
<circle cx="263" cy="74" r="3.7" fill="#fff" stroke="#111" stroke-width="1.3"/>
<path d="M265.6,71.3 L275.9,56.8 L267.1,72.3 Z" fill="#e00000" stroke="#e00000" stroke-width="0.7"/>
<path d="M281.8,62.6 L288.6,69.7" stroke="#222" stroke-width="2.6"/>
<path d="M281.8,62.6 L288.6,69.7" stroke="#fff" stroke-width="0.7"/>
<path d="M283.2,77.9 L288.6,69.7" stroke="#222" stroke-width="2.6"/>
<path d="M283.2,77.9 L288.6,69.7" stroke="#fff" stroke-width="0.7"/>
<path d="M291.5,67.3 L296,64.6" stroke="#111" stroke-width="1.6"/>
<circle cx="281.8" cy="62.6" r="2.7" fill="#fff" stroke="#111" stroke-width="1.2"/>
<circle cx="283.2" cy="77.9" r="3" fill="#fff" stroke="#111" stroke-width="1.2"/>
<circle cx="288.6" cy="69.7" r="4" fill="#fff" stroke="#111" stroke-width="1.3"/>
<text x="295.6" y="66.4" font-family="Liberation Sans,sans-serif" font-weight="bold" font-size="10.8" fill="#000">H</text>
<path d="M309.1,63.3 L315.5,70.1" stroke="#a8a8a8" stroke-width="1.5"/>
<path d="M315.5,70.1 L310.2,77.2" stroke="#a8a8a8" stroke-width="1.5"/>
<path d="M315.5,70.1 L325.1,75.7" stroke="#a8a8a8" stroke-width="1.5"/>
<path d="M325.8,64.8 L325.1,75.7" stroke="#a8a8a8" stroke-width="1.5"/>
<path d="M318,60.5 L325.8,64.8" stroke="#a8a8a8" stroke-width="1.5"/>
<circle cx="309.1" cy="63.3" r="2.5" fill="#fdfdfd" stroke="#a8a8a8" stroke-width="1.1"/>
<circle cx="318" cy="60.5" r="2.7" fill="#fdfdfd" stroke="#a8a8a8" stroke-width="1.1"/>
<circle cx="325.8" cy="64.8" r="3.2" fill="#fdfdfd" stroke="#a8a8a8" stroke-width="1.1"/>
<circle cx="315.5" cy="70.1" r="4" fill="#fdfdfd" stroke="#a8a8a8" stroke-width="1.1"/>
<circle cx="310.2" cy="77.2" r="3" fill="#fdfdfd" stroke="#a8a8a8" stroke-width="1.1"/>
<circle cx="325.1" cy="75.7" r="3.5" fill="#fdfdfd" stroke="#a8a8a8" stroke-width="1.1"/>
<rect x="332.3" y="57" width="26.2" height="25.5" rx="4.5" fill="url(#gGear)"/>
<path d="M344.70,63.95 L346.49,64.36 L346.14,66.08 L344.33,65.76 L343.45,67.07 L344.42,68.63 L342.96,69.60 L341.90,68.10 L340.35,68.40 L339.94,70.19 L338.22,69.84 L338.54,68.03 L337.23,67.15 L335.67,68.12 L334.70,66.66 L336.20,65.60 L335.90,64.05 L334.11,63.64 L334.46,61.92 L336.27,62.24 L337.15,60.93 L336.18,59.37 L337.64,58.40 L338.70,59.90 L340.25,59.60 L340.66,57.81 L342.38,58.16 L342.06,59.97 L343.37,60.85 L344.93,59.88 L345.90,61.34 L344.40,62.40 Z" fill="#fff" stroke="#1c1c1c" stroke-width="1" stroke-linejoin="round"/>
<circle cx="340.30" cy="64.00" r="1.9" fill="#fff" stroke="#8a8a8a" stroke-width="0.9"/>
<path d="M355.70,74.40 L357.63,75.35 L356.76,77.42 L354.73,76.69 L353.22,78.18 L353.92,80.22 L351.83,81.06 L350.92,79.11 L348.80,79.10 L347.85,81.03 L345.78,80.16 L346.51,78.13 L345.02,76.62 L342.98,77.32 L342.14,75.23 L344.09,74.32 L344.10,72.20 L342.17,71.25 L343.04,69.18 L345.07,69.91 L346.58,68.42 L345.88,66.38 L347.97,65.54 L348.88,67.49 L351.00,67.50 L351.95,65.57 L354.02,66.44 L353.29,68.47 L354.78,69.98 L356.82,69.28 L357.66,71.37 L355.71,72.28 Z" fill="#fff" stroke="#1c1c1c" stroke-width="1" stroke-linejoin="round"/>
<circle cx="349.90" cy="73.30" r="3.4" fill="#fff" stroke="#8a8a8a" stroke-width="0.9"/>
<g transform="translate(380.6,63.6) rotate(-28)"><ellipse rx="7.6" ry="4.8" fill="#fff" stroke="#000" stroke-width="2"/><path d="M-4.6,-0.6 A5,2.6 0 0 1 3.5,-2.2" stroke="#000" stroke-width="0.9" fill="none"/></g>
<g transform="translate(386.1,71.4) rotate(-30)"><ellipse rx="8.6" ry="6" fill="#000"/><path d="M-4.8,-1.6 A6,3.2 0 0 1 3.6,-3.4" stroke="#fff" stroke-width="0.9" fill="none"/></g>
<rect x="399.4" y="57.1" width="165.4" height="25.5" rx="4.5" fill="#fff" stroke="#767676" stroke-width="1.6"/>
<path d="M586.4,58.6 L604.6,75.2 L588.1,72.3 Z" fill="#aaaaaa"/>
<path d="M586.4,58.6 L588.1,72.3 L581.5,81.6 Z" fill="#bcbcbc"/>
<path d="M588.1,72.3 L604.6,75.2 L581.5,81.6 Z" fill="#a2a2a2"/>
<path d="M587,60.5 L588.1,72.3 L603,75.4" stroke="#383838" stroke-width="2.4" fill="none" stroke-linejoin="round" stroke-linecap="round"/>
<path d="M588.1,72.3 L583,80.2" stroke="#6e6e6e" stroke-width="2.4" stroke-linecap="round"/>
<rect x="222.5" y="94.9" width="5.4" height="5" fill="none" stroke="#222" stroke-width="1.1"/>
<path d="M222,94.7 h6.5" stroke="#222" stroke-width="1.7"/>
<rect x="220.4" y="97.6" width="5.4" height="5" fill="#f0f0f0" stroke="#222" stroke-width="1.1"/>
<path d="M219.9,97.5 h6.5" stroke="#222" stroke-width="1.7"/>
<path d="M241.2,95.6 l7,7 m0,-7 l-7,7" stroke="#222" stroke-width="1.8"/>
<rect x="222.5" y="410.9" width="5.4" height="5" fill="none" stroke="#222" stroke-width="1.1"/>
<path d="M222,410.7 h6.5" stroke="#222" stroke-width="1.7"/>
<rect x="220.4" y="413.6" width="5.4" height="5" fill="#f0f0f0" stroke="#222" stroke-width="1.1"/>
<path d="M219.9,413.5 h6.5" stroke="#222" stroke-width="1.7"/>
<path d="M241.2,411.6 l7,7 m0,-7 l-7,7" stroke="#222" stroke-width="1.8"/>
<rect x="1446.8" y="94.9" width="5.4" height="5" fill="none" stroke="#222" stroke-width="1.1"/>
<path d="M1446.3,94.7 h6.5" stroke="#222" stroke-width="1.7"/>
<rect x="1444.7" y="97.6" width="5.4" height="5" fill="#f0f0f0" stroke="#222" stroke-width="1.1"/>
<path d="M1444.2,97.5 h6.5" stroke="#222" stroke-width="1.7"/>
<path d="M1465.5,95.6 l7,7 m0,-7 l-7,7" stroke="#222" stroke-width="1.8"/>
<rect x="1446.8" y="724.3" width="5.4" height="5" fill="none" stroke="#222" stroke-width="1.1"/>
<path d="M1446.3,724.1 h6.5" stroke="#222" stroke-width="1.7"/>
<rect x="1444.7" y="727" width="5.4" height="5" fill="#f0f0f0" stroke="#222" stroke-width="1.1"/>
<path d="M1444.2,726.9 h6.5" stroke="#222" stroke-width="1.7"/>
<path d="M1465.5,725 l7,7 m0,-7 l-7,7" stroke="#222" stroke-width="1.8"/>
<path d="M243.9,123.8 H252.1 L248,118 Z" fill="#a3a3a3"/>
<path d="M243.9,386.3 H252.1 L248,392.1 Z" fill="#a3a3a3"/>
<path d="M5.6,435.1 l6.3,6.1 l6.3,-6.1" stroke="#000" stroke-width="2.7" fill="none"/>
<path d="M1230.6,179.1 l6.3,6.1 l6.3,-6.1" stroke="#000" stroke-width="2.7" fill="none"/>
<path d="M108.2,943.4 l3.8,3.9 l3.8,-3.9" stroke="#444" stroke-width="1" fill="none"/>
<ellipse cx="278" cy="112.6" rx="9" ry="1.8" fill="url(#gShadow)"/>
<circle cx="277.9" cy="102.2" r="9.9" fill="#dcc0c0" stroke="#7a4646" stroke-width="1.1"/>
<circle cx="277.9" cy="102.2" r="8.6" fill="url(#gAxis)"/>
<ellipse cx="329.3" cy="112.6" rx="9" ry="1.8" fill="url(#gShadow)"/>
<circle cx="329.2" cy="102.2" r="9.9" fill="#d8e3cc" stroke="#50664a" stroke-width="1.1"/>
<circle cx="329.2" cy="102.2" r="8.6" fill="url(#gFit)"/>
<g transform="translate(404.2,102.7)"><path d="M-9.97,-0.31 A10,10 0 0 1 6.44,-7.6 L9.66,-9.8 L9.97,-0.3 L-0.15,-2.3 L3.68,-4.3 A5.7,5.7 0 0 0 -5.83,-0.3 Z" fill="url(#gBlue)" stroke="#0d3d78" stroke-width="0.9" stroke-linejoin="round"/><path d="M-9.97,-0.31 A10,10 0 0 1 6.44,-7.6 L9.66,-9.8 L9.97,-0.3 L-0.15,-2.3 L3.68,-4.3 A5.7,5.7 0 0 0 -5.83,-0.3 Z" transform="rotate(180)" fill="url(#gBlue2)" stroke="#0d3d78" stroke-width="0.9" stroke-linejoin="round"/></g>
<path d="M494,95.8 L508.2,103 L494,110.3 Z" fill="#000"/>
<ellipse cx="719" cy="112.3" rx="10" ry="2.4" fill="url(#gShadow)"/>
<path transform="translate(0,0.6)" d="M721.2,91.1 H730 Q730.7,91.1 730.7,91.8 V101.2 L722.1,109.5 H717.2 V113.4 L708.1,104.7 L717,96.2 L717.2,100.3 H720.5 V91.8 Q720.5,91.1 721.2,91.1 Z" fill="url(#gInit)" stroke="#2a3322" stroke-width="1.1" stroke-linejoin="round"/>
<path d="M575.8,110 h5.4 l-2.7,-3 Z M575.8,114.2 h5.4 l-2.7,3 Z" fill="#000"/>
<path d="M572,112 h12" stroke="#b0b0b0" stroke-width="1"/>
<path d="M665.8,110 h5.4 l-2.7,-3 Z M665.8,114.2 h5.4 l-2.7,3 Z" fill="#000"/>
<path d="M662,112 h12" stroke="#b0b0b0" stroke-width="1"/>
<path d="M804.4,110 h5.4 l-2.7,-3 Z M804.4,114.2 h5.4 l-2.7,3 Z" fill="#000"/>
<path d="M800.6,112 h12" stroke="#b0b0b0" stroke-width="1"/>
<path d="M882.8,110 h5.4 l-2.7,-3 Z M882.8,114.2 h5.4 l-2.7,3 Z" fill="#000"/>
<path d="M879,112 h12" stroke="#b0b0b0" stroke-width="1"/>
<path d="M961.3,110 h5.4 l-2.7,-3 Z M961.3,114.2 h5.4 l-2.7,3 Z" fill="#000"/>
<path d="M957.5,112 h12" stroke="#b0b0b0" stroke-width="1"/>
<path d="M1082.8,110 h5.4 l-2.7,-3 Z M1082.8,114.2 h5.4 l-2.7,3 Z" fill="#000"/>
<path d="M1079,112 h12" stroke="#b0b0b0" stroke-width="1"/>
<path d="M1168.8,110 h5.4 l-2.7,-3 Z M1168.8,114.2 h5.4 l-2.7,3 Z" fill="#000"/>
<path d="M1165,112 h12" stroke="#b0b0b0" stroke-width="1"/>
<rect x="1475.8" y="972.9" width="2" height="2" fill="#bdbdbd"/>
<rect x="1472.8" y="972.9" width="2" height="2" fill="#bdbdbd"/>
<rect x="1469.8" y="972.9" width="2" height="2" fill="#bdbdbd"/>
<rect x="1475.8" y="969.9" width="2" height="2" fill="#bdbdbd"/>
<rect x="1472.8" y="969.9" width="2" height="2" fill="#bdbdbd"/>
<rect x="1475.8" y="966.9" width="2" height="2" fill="#bdbdbd"/></svg><span class="t" id="t0" style="left:30.44px;top:8.00px;color:#111;font-size:12px;font-weight:normal;letter-spacing:0.000px;transform:scaleX(0.9604);transform-origin:0 0;">CONFLEX Interface - [Cyclohexane-F: Cyclohexane.mol (Cyclohexane-F.sdf)]</span>
<span class="t" id="t1" style="left:24.00px;top:34.00px;color:#000;font-size:12px;font-weight:normal;letter-spacing:0.000px;transform:scaleX(0.9765);transform-origin:0 0;">File</span>
<span class="t" id="t2" style="left:58.84px;top:34.00px;color:#000;font-size:12px;font-weight:normal;letter-spacing:0.028px;">Edit</span>
<span class="t" id="t3" style="left:96.61px;top:34.00px;color:#000;font-size:12px;font-weight:normal;letter-spacing:0.000px;transform:scaleX(0.9709);transform-origin:0 0;">View</span>
<span class="t" id="t4" style="left:137.94px;top:34.00px;color:#000;font-size:12px;font-weight:normal;letter-spacing:0.000px;transform:scaleX(0.9942);transform-origin:0 0;">Calculation</span>
<span class="t" id="t5" style="left:213.84px;top:34.00px;color:#000;font-size:12px;font-weight:normal;letter-spacing:0.000px;transform:scaleX(0.9562);transform-origin:0 0;">Tools</span>
<span class="t" id="t6" style="left:257.50px;top:34.00px;color:#000;font-size:12px;font-weight:normal;letter-spacing:0.081px;">Window</span>
<span class="t" id="t7" style="left:317.85px;top:34.00px;color:#000;font-size:12px;font-weight:normal;letter-spacing:0.032px;">Applications</span>
<span class="t" id="t8" style="left:398.63px;top:34.00px;color:#000;font-size:12px;font-weight:normal;letter-spacing:0.171px;">Help</span>
<span class="t" id="t9" style="left:72.53px;top:92.00px;color:#000;font-size:12px;font-weight:normal;letter-spacing:0.006px;">Molecule Box</span>
<span class="t" id="t10" style="left:5.40px;top:117.00px;color:#000;font-size:12px;font-weight:normal;letter-spacing:0.048px;">Molecule Name</span>
<span class="t" id="t11" style="left:129.00px;top:117.00px;color:#000;font-size:12px;font-weight:normal;letter-spacing:0.000px;transform:scaleX(0.9684);transform-origin:0 0;">File Type</span>
<span class="t" id="t12" style="left:24.44px;top:138.00px;color:#000;font-size:12px;font-weight:normal;letter-spacing:0.000px;transform:scaleX(0.9638);transform-origin:0 0;">Cyclohexane-F.mol</span>
<span class="t" id="t13" style="left:128.20px;top:138.00px;color:#000;font-size:12px;font-weight:normal;letter-spacing:0.000px;transform:scaleX(0.969);transform-origin:0 0;">MDL Files</span>
<span class="t" id="t14" style="left:24.44px;top:156.00px;color:#000;font-size:12px;font-weight:normal;letter-spacing:0.000px;transform:scaleX(0.9483);transform-origin:0 0;">Cyclohexane-F.sdf</span>
<span class="t" id="t15" style="left:128.20px;top:156.00px;color:#000;font-size:12px;font-weight:normal;letter-spacing:0.000px;transform:scaleX(0.969);transform-origin:0 0;">MDL Files</span>
<span class="t" id="t16" style="left:74.40px;top:408.00px;color:#000;font-size:12px;font-weight:normal;letter-spacing:0.000px;transform:scaleX(0.9894);transform-origin:0 0;">Property Box</span>
<span class="t" id="t17" style="left:24.64px;top:430.00px;color:#000;font-size:12px;font-weight:normal;letter-spacing:0.016px;">ID</span>
<span class="t" id="t18" style="left:57.53px;top:430.00px;color:#000;font-size:12px;font-weight:normal;letter-spacing:0.000px;transform:scaleX(0.9955);transform-origin:0 0;">Conformers (Population)</span>
<span class="t" id="t19" style="left:45.56px;top:448.00px;color:#000;font-size:12px;font-weight:normal;letter-spacing:0.000px;transform:scaleX(0.7973);transform-origin:0 0;">1</span>
<span class="t" id="t20" style="left:58.76px;top:448.00px;color:#000;font-size:12px;font-weight:normal;letter-spacing:0.000px;transform:scaleX(0.9785);transform-origin:0 0;">-3.560936 kcal/mol (99.9955 %)</span>
<span class="t" id="t21" style="left:44.65px;top:466.00px;color:#000;font-size:12px;font-weight:normal;letter-spacing:0.000px;">2</span>
<span class="t" id="t22" style="left:57.64px;top:466.00px;color:#000;font-size:12px;font-weight:normal;letter-spacing:0.000px;transform:scaleX(0.9746);transform-origin:0 0;">2.368785 kcal/mol (0.0045 %)</span>
<span class="t" id="t23" style="left:44.80px;top:484.00px;color:#000;font-size:12px;font-weight:normal;letter-spacing:0.000px;">3</span>
<span class="t" id="t24" style="left:57.42px;top:484.00px;color:#000;font-size:12px;font-weight:normal;letter-spacing:0.000px;transform:scaleX(0.98);transform-origin:0 0;">3.110913 kcal/mol (0.0000 %)</span>
<span class="t" id="t25" style="left:268.43px;top:118.00px;color:#000;font-size:12px;font-weight:normal;letter-spacing:0.000px;transform:scaleX(0.9342);transform-origin:0 0;">Axis</span>
<span class="t" id="t26" style="left:312.27px;top:118.00px;color:#000;font-size:12px;font-weight:normal;letter-spacing:0.259px;">Fitting</span>
<span class="t" id="t27" style="left:369.00px;top:118.00px;color:#000;font-size:12px;font-weight:normal;letter-spacing:0.000px;transform:scaleX(0.9936);transform-origin:0 0;">Superimpose</span>
<span class="t" id="t28" style="left:478.85px;top:118.00px;color:#000;font-size:12px;font-weight:normal;letter-spacing:0.000px;transform:scaleX(0.9937);transform-origin:0 0;">Animate</span>
<span class="t" id="t29" style="left:709.09px;top:118.00px;color:#000;font-size:12px;font-weight:normal;letter-spacing:0.376px;">Init.</span>
<span class="t" id="t30" style="left:542.54px;top:105.00px;color:#000;font-size:12px;font-weight:normal;letter-spacing:0.000px;transform:scaleX(0.9461);transform-origin:0 0;">ID: 1</span>
<span class="t" id="t31" style="left:599.80px;top:105.00px;color:#000;font-size:12px;font-weight:normal;letter-spacing:0.000px;transform:scaleX(0.9612);transform-origin:0 0;">10 msec</span>
<span class="t" id="t32" style="left:748.75px;top:105.00px;color:#000;font-size:12px;font-weight:normal;letter-spacing:0.000px;transform:scaleX(0.9531);transform-origin:0 0;">X: -80.7</span>
<span class="t" id="t33" style="left:828.47px;top:105.00px;color:#000;font-size:12px;font-weight:normal;letter-spacing:0.000px;transform:scaleX(0.9074);transform-origin:0 0;">Y: 10.9</span>
<span class="t" id="t34" style="left:907.11px;top:105.00px;color:#000;font-size:12px;font-weight:normal;letter-spacing:0.000px;transform:scaleX(0.9601);transform-origin:0 0;">Z: -40.5</span>
<span class="t" id="t35" style="left:1001.64px;top:105.00px;color:#000;font-size:12px;font-weight:normal;letter-spacing:0.000px;transform:scaleX(0.9802);transform-origin:0 0;">Columns:</span>
<span class="t" id="t36" style="left:1054.97px;top:105.00px;color:#fff;font-size:12px;font-weight:normal;letter-spacing:0.000px;transform:scaleX(0.8256);transform-origin:0 0;">2</span>
<span class="t" id="t37" style="left:1106.20px;top:105.00px;color:#000;font-size:12px;font-weight:normal;letter-spacing:0.000px;transform:scaleX(0.9341);transform-origin:0 0;">Rows: 1</span>
<span class="t" id="t38" style="left:272.60px;top:154.00px;color:#00ff00;font-size:19px;font-weight:bold;letter-spacing:0.000px;line-height:20px;height:20px;transform:scaleX(0.8611);transform-origin:0 0;">ID: 1</span>
<span class="t" id="t39" style="left:752.60px;top:154.00px;color:#00ff00;font-size:19px;font-weight:bold;letter-spacing:0.000px;line-height:20px;height:20px;transform:scaleX(0.898);transform-origin:0 0;">ID: 2</span>
<span class="t" id="t40" style="left:1288.53px;top:92.00px;color:#000;font-size:12px;font-weight:normal;letter-spacing:0.000px;transform:scaleX(1.0019);transform-origin:0 0;">Object Inspector</span>
<span class="t" id="t41" style="left:1224.74px;top:112.00px;color:#000;font-size:12px;font-weight:normal;letter-spacing:0.097px;">Molecule</span>
<span class="t" id="t42" style="left:1229.40px;top:136.00px;color:#000;font-size:12px;font-weight:normal;letter-spacing:-0.001px;">Property Name</span>
<span class="t" id="t43" style="left:1353.62px;top:136.00px;color:#000;font-size:12px;font-weight:normal;letter-spacing:0.000px;transform:scaleX(0.9464);transform-origin:0 0;">Values</span>
<span class="t" id="t44" style="left:1248.20px;top:157.00px;color:#000;font-size:12px;font-weight:normal;letter-spacing:0.000px;transform:scaleX(0.9684);transform-origin:0 0;">File Path</span>
<span class="t" id="t45" style="left:1352.51px;top:157.00px;color:#000;font-size:12px;font-weight:normal;letter-spacing:0.000px;transform:scaleX(0.9174);transform-origin:0 0;">C:/CONFLEX/Sample_…</span>
<span class="t" id="t46" style="left:1248.89px;top:175.00px;color:#000;font-size:12px;font-weight:normal;letter-spacing:0.025px;">Comment</span>
<span class="t" id="t47" style="left:1352.44px;top:193.00px;color:#000;font-size:12px;font-weight:normal;letter-spacing:0.000px;transform:scaleX(0.9816);transform-origin:0 0;">Cyclohexane.mol</span>
<span class="t" id="t48" style="left:1352.51px;top:211.00px;color:#000;font-size:12px;font-weight:normal;letter-spacing:0.000px;transform:scaleX(0.9268);transform-origin:0 0;">CONFLEX 250401091…</span>
<span class="t" id="t49" style="left:1352.00px;top:229.00px;color:#000;font-size:12px;font-weight:normal;letter-spacing:0.000px;transform:scaleX(0.9587);transform-origin:0 0;">D3D ,E = -3.561, G = …</span>
<span class="t" id="t50" style="left:1248.40px;top:247.00px;color:#000;font-size:12px;font-weight:normal;letter-spacing:0.250px;">Num Atoms</span>
<span class="t" id="t51" style="left:1353.20px;top:247.00px;color:#000;font-size:12px;font-weight:normal;letter-spacing:0.000px;transform:scaleX(0.9465);transform-origin:0 0;">18</span>
<span class="t" id="t52" style="left:1248.40px;top:265.00px;color:#000;font-size:12px;font-weight:normal;letter-spacing:0.031px;">Num Bonds</span>
<span class="t" id="t53" style="left:1353.20px;top:265.00px;color:#000;font-size:12px;font-weight:normal;letter-spacing:0.000px;transform:scaleX(0.9465);transform-origin:0 0;">18</span>
<span class="t" id="t54" style="left:1248.20px;top:283.00px;color:#000;font-size:12px;font-weight:normal;letter-spacing:0.000px;transform:scaleX(0.9882);transform-origin:0 0;">Radius of Gyration</span>
<span class="t" id="t55" style="left:1352.45px;top:283.00px;color:#000;font-size:12px;font-weight:normal;letter-spacing:0.000px;transform:scaleX(0.9558);transform-origin:0 0;">2.038941</span>
<span class="t" id="t56" style="left:1248.20px;top:301.00px;color:#000;font-size:12px;font-weight:normal;letter-spacing:0.000px;transform:scaleX(0.9577);transform-origin:0 0;">RMSd</span>
<span class="t" id="t57" style="left:1352.90px;top:301.00px;color:#000;font-size:12px;font-weight:normal;letter-spacing:0.000px;transform:scaleX(0.961);transform-origin:0 0;">0.926697</span>
<span class="t" id="t58" style="left:685.87px;top:721.00px;color:#000;font-size:12px;font-weight:normal;letter-spacing:0.000px;transform:scaleX(0.9822);transform-origin:0 0;">Job Manager</span>
<span class="t" id="t59" style="left:18.59px;top:746.00px;color:#000;font-size:12px;font-weight:normal;letter-spacing:0.000px;-webkit-text-stroke:0.4px #000;transform:scaleX(0.9623);transform-origin:0 0;">Process ID</span>
<span class="t" id="t60" style="left:83.71px;top:746.00px;color:#000;font-size:12px;font-weight:normal;letter-spacing:0.164px;-webkit-text-stroke:0.4px #000;">Program</span>
<span class="t" id="t61" style="left:138.94px;top:746.00px;color:#000;font-size:12px;font-weight:normal;letter-spacing:0.000px;-webkit-text-stroke:0.4px #000;transform:scaleX(0.9781);transform-origin:0 0;">Job Type</span>
<span class="t" id="t62" style="left:218.31px;top:746.00px;color:#000;font-size:12px;font-weight:normal;letter-spacing:0.290px;-webkit-text-stroke:0.4px #000;">Molecule</span>
<span class="t" id="t63" style="left:307.39px;top:746.00px;color:#000;font-size:12px;font-weight:normal;letter-spacing:0.000px;-webkit-text-stroke:0.4px #000;transform:scaleX(0.9852);transform-origin:0 0;">State</span>
<span class="t" id="t64" style="left:350.73px;top:746.00px;color:#000;font-size:12px;font-weight:normal;letter-spacing:0.072px;-webkit-text-stroke:0.4px #000;">Execution Time</span>
<span class="t" id="t65" style="left:441.87px;top:746.00px;color:#000;font-size:12px;font-weight:normal;letter-spacing:-0.006px;-webkit-text-stroke:0.4px #000;">Remaining Cycle</span>
<span class="t" id="t66" style="left:541.01px;top:746.00px;color:#000;font-size:12px;font-weight:normal;letter-spacing:0.074px;-webkit-text-stroke:0.4px #000;">Estimated Remaining Time</span>
<span class="t" id="t67" style="left:1057.30px;top:746.00px;color:#000;font-size:12px;font-weight:normal;letter-spacing:0.160px;-webkit-text-stroke:0.4px #000;">Command</span>
<span class="t" id="t68" style="left:5.69px;top:772.00px;color:#000;font-size:12px;font-weight:normal;letter-spacing:0.000px;transform:scaleX(0.7122);transform-origin:0 0;">1</span>
<span class="t" id="t69" style="left:39.80px;top:772.00px;color:#000;font-size:12px;font-weight:normal;letter-spacing:1.247px;">---</span>
<span class="t" id="t70" style="left:88.22px;top:772.00px;color:#000;font-size:12px;font-weight:normal;letter-spacing:-0.054px;">conflex</span>
<span class="t" id="t71" style="left:145.44px;top:772.00px;color:#000;font-size:12px;font-weight:normal;letter-spacing:0.000px;transform:scaleX(0.9532);transform-origin:0 0;">search</span>
<span class="t" id="t72" style="left:193.84px;top:772.00px;color:#000;font-size:12px;font-weight:normal;letter-spacing:0.000px;transform:scaleX(0.9603);transform-origin:0 0;">Cyclohexane-F.mol</span>
<span class="t" id="t73" style="left:298.00px;top:772.00px;color:#000;font-size:12px;font-weight:normal;letter-spacing:0.000px;transform:scaleX(0.9837);transform-origin:0 0;">Finished</span>
<span class="t" id="t74" style="left:384.80px;top:772.00px;color:#000;font-size:12px;font-weight:normal;letter-spacing:1.247px;">---</span>
<span class="t" id="t75" style="left:479.12px;top:772.00px;color:#000;font-size:12px;font-weight:normal;letter-spacing:1.311px;">---</span>
<span class="t" id="t76" style="left:605.80px;top:772.00px;color:#000;font-size:12px;font-weight:normal;letter-spacing:1.247px;">---</span>
<span class="t" id="t77" style="left:1077.52px;top:772.00px;color:#000;font-size:12px;font-weight:normal;letter-spacing:1.242px;">---</span>
<span class="t" id="t78" style="left:5.90px;top:937.00px;color:#000;font-size:12px;font-weight:normal;letter-spacing:0.000px;transform:scaleX(0.9364);transform-origin:0 0;">Server :</span>
<span class="t" id="t79" style="left:47.40px;top:937.00px;color:#000;font-size:12px;font-weight:normal;letter-spacing:0.000px;transform:scaleX(0.9698);transform-origin:0 0;">Localhost</span>
<span class="t" id="t80" style="left:138.00px;top:937.00px;color:#000;font-size:12px;font-weight:normal;letter-spacing:0.000px;transform:scaleX(0.9645);transform-origin:0 0;">Refresh</span>
<span class="t" id="t81" style="left:757.96px;top:937.00px;color:#a0a0a0;font-size:12px;font-weight:normal;letter-spacing:0.000px;transform:scaleX(0.9684);transform-origin:0 0;">Open Result</span>
<span class="t" id="t82" style="left:1387.40px;top:937.00px;color:#000;font-size:12px;font-weight:normal;letter-spacing:0.000px;transform:scaleX(1.0041);transform-origin:0 0;">Delete from List</span>
<span class="t" id="t83" style="left:2.60px;top:960.00px;color:#000;font-size:12px;font-weight:normal;letter-spacing:0.000px;transform:scaleX(1.0041);transform-origin:0 0;">Started.</span>
</div></body></html>
